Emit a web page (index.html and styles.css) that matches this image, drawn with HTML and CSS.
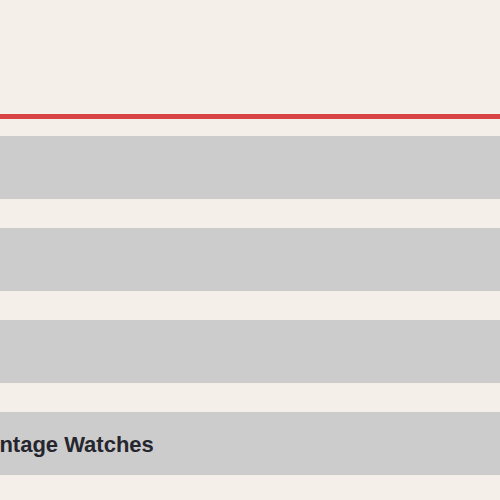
FILE: index.html
```html
<!DOCTYPE html>
<html>
<head>
<meta charset="utf-8">
<link rel="stylesheet" href="styles.css">
</head>
<body>
<header class="top"></header>
<ul class="menu">
  <li class="item"></li>
  <li class="item"></li>
  <li class="item"></li>
  <li class="item"><span class="label">Vintage Watches</span></li>
</ul>
</body>
</html>
```
FILE: styles.css
```css
html, body {
  margin: 0;
  padding: 0;
  background: #f4efe9;
  font-family: "Liberation Sans", Arial, sans-serif;
}
.top {
  height: 114px;
  border-bottom: 5px solid #d84444;
}
.menu {
  list-style: none;
  margin: 0;
  padding: 17px 0 0;
  display: flex;
  flex-direction: column;
  gap: 29px;
}
.item {
  height: 63px;
  background: #cccccc;
  display: flex;
  align-items: center;
}
.label {
  margin-left: -21px;
  padding-top: 2px;
  font-size: 22px;
  font-weight: bold;
  color: #26262e;
  white-space: nowrap;
}
```
